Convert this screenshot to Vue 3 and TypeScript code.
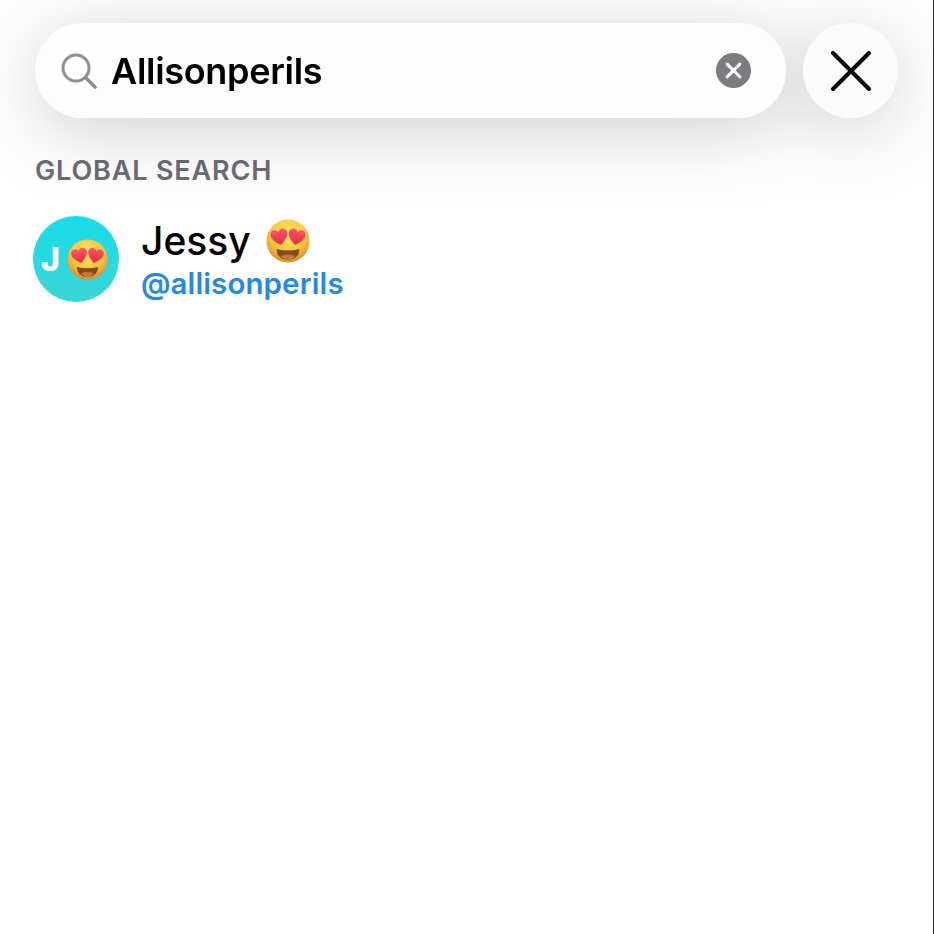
<template>
  <div class="screen">
    <!-- shared emoji, used in the avatar and next to the name -->
    <svg class="defs" width="0" height="0" aria-hidden="true">
      <defs>
        <radialGradient id="face" cx="50%" cy="32%" r="68%">
          <stop offset="0%" stop-color="#fde668" />
          <stop offset="60%" stop-color="#f9c63f" />
          <stop offset="100%" stop-color="#dd8a26" />
        </radialGradient>
        <linearGradient id="heart" x1="0" y1="0" x2="0" y2="1">
          <stop offset="0%" stop-color="#f9566a" />
          <stop offset="100%" stop-color="#e42c3c" />
        </linearGradient>
        <path id="heart-shape" d="M0 8C-5.500 4-8.500 .4-8.500-3.200-8.500-6-6.400-7.800-4.200-7.800-2.200-7.800-.8-6.700 0-5-.8-6.700 0-5 0-5 .8-6.700 2.200-7.800 4.200-7.800 6.400-7.800 8.500-6 8.500-3.200 8.500 .4 5.500 4 0 8z" fill="url(#heart)" />
        <symbol id="heart-eyes" viewBox="0 0 44 44">
          <circle cx="22" cy="22" r="21.500" fill="url(#face)" />
          <path d="M10.500 30Q22 33 33.500 30 33 40.500 22 40.500 11 40.500 10.500 30z" fill="#7f4c1c" />
          <path d="M15 37Q22 34 29 37 26 40.500 22 40.500 18 40.500 15 37z" fill="#c47a38" />
          <use href="#heart-shape" transform="translate(13.500 18) rotate(-12)" />
          <use href="#heart-shape" transform="translate(30.500 18) rotate(12)" />
        </symbol>
      </defs>
    </svg>

    <header class="top">
      <div class="bar">
        <svg class="glass" viewBox="0 0 36 36" fill="none" stroke="#8e8e93" stroke-linecap="round">
          <circle cx="15" cy="15" r="13" stroke-width="3" />
          <path d="M25 25l9 9" stroke-width="3.600" />
        </svg>
        <span class="query">Allisonperils</span>
        <span class="clear">
          <svg viewBox="0 0 16 16" fill="none" stroke="#fff" stroke-width="2.800" stroke-linecap="round">
            <path d="M2 2l12 12M14 2L2 14" />
          </svg>
        </span>
      </div>
      <button class="close" type="button" aria-label="Close">
        <svg viewBox="0 0 40 40" fill="none" stroke="#000" stroke-width="4" stroke-linecap="round">
          <path d="M2 2l36 36M38 2L2 38" />
        </svg>
      </button>
    </header>

    <h2 class="label">GLOBAL SEARCH</h2>

    <div class="result">
      <div class="avatar">
        <span class="initial">J</span>
        <svg class="avatar-emoji"><use href="#heart-eyes" /></svg>
      </div>
      <div class="meta">
        <div class="name">
          {{ result.name }}
          <svg class="name-emoji"><use href="#heart-eyes" /></svg>
        </div>
        <div class="handle">{{ result.handle }}</div>
      </div>
    </div>
  </div>
</template>

<script setup lang="ts">
const result = { name: 'Jessy', handle: '@allisonperils' }
</script>

<style scoped>
.screen {
  position: relative;
  width: 934px;
  height: 934px;
  overflow: hidden;
  background: #fff;
  /* thin dark edge down the right side of the shot */
  box-shadow: inset -1px 0 0 #2b2b2b;
  font-family: Inter, "Liberation Sans", sans-serif;
  color: #000;
}
.defs { position: absolute; }

.top {
  display: flex;
  gap: 17px;
  padding: 23px 0 0 35px;
  /* one soft shadow behind both the bar and the round button */
  filter: drop-shadow(0 12px 38px rgba(0, 0, 0, 0.19));
}
.bar {
  display: flex;
  align-items: center;
  width: 751px;
  height: 95px;
  padding: 0 35px 0 26px;
  box-sizing: border-box;
  border-radius: 48px;
  background: #fdfdfd;
}
.glass { width: 36px; height: 36px; flex: none; }
.query {
  flex: 1;
  margin-left: 14px;
  font-size: 36px;
  font-weight: 600;
  letter-spacing: -0.3px;
}
.clear {
  display: flex;
  align-items: center;
  justify-content: center;
  width: 35px;
  height: 35px;
  border-radius: 50%;
  background: #7b7b81;
}
.clear svg { width: 17px; height: 17px; }
.close {
  display: flex;
  align-items: center;
  justify-content: center;
  width: 95px;
  height: 95px;
  padding: 0;
  border: none;
  border-radius: 50%;
  background: #fbfbfb;
}
.close svg { width: 40px; height: 40px; }

.label {
  margin: 36px 0 0 35px;
  font-size: 27px;
  line-height: 34px;
  font-weight: 600;
  letter-spacing: 0.85px;
  color: #6c6c74;
}

.result {
  display: flex;
  align-items: center;
  gap: 23px;
  margin: 28px 0 0 33px;
}
.avatar {
  position: relative;
  width: 86px;
  height: 86px;
  border-radius: 50%;
  background: linear-gradient(#17dce9, #3dd5d6);
}
.initial {
  position: absolute;
  left: 8px;
  top: 25px;
  font-size: 32px;
  line-height: 38px;
  font-weight: 800;
  color: #fff;
}
.avatar-emoji {
  position: absolute;
  left: 34px;
  top: 23px;
  width: 41px;
  height: 41px;
}
.meta { display: flex; flex-direction: column; }
.name {
  display: flex;
  align-items: center;
  gap: 15px;
  font-size: 39px;
  line-height: 48px;
  font-weight: 500;
  margin-left: -1px;
}
.name-emoji { width: 44px; height: 44px; }
.handle {
  margin-left: -1px;
  font-size: 29.500px;
  line-height: 36px;
  font-weight: 600;
  letter-spacing: 0.1px;
  color: #2488e6;
}
</style>
